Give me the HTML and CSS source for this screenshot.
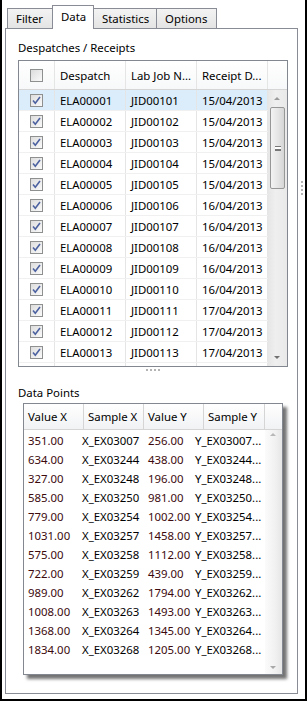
FILE: index.html
```html
<!DOCTYPE html>
<html lang="en">
<head>
  <meta charset="UTF-8" />
  <title>Data</title>
  <link rel="stylesheet" href="styles.css">
</head>
<body>
  <div class="window">
    <div class="main">
      <div class="tabs">
        <div class="tab">Filter</div>
        <div class="tab active">Data</div>
        <div class="tab">Statistics</div>
        <div class="tab">Options</div>
      </div>

      <div class="panel">
        <div class="label first">Despatches / Receipts</div>

        <div class="grid1">
          <div class="g1-head">
            <div class="c-chk"><span class="box"></span></div>
            <div class="c-col">Despatch</div>
            <div class="c-col">Lab Job N...</div>
            <div class="c-col">Receipt D...</div>
            <div class="c-pad"></div>
          </div>
          <div class="g1-body">
            <div class="g1-rows" id="rows1"></div>
            <div class="vscroll">
              <div class="arrow up"></div>
              <div class="thumb"><span class="grip-lines"></span></div>
              <div class="track"></div>
              <div class="arrow down"></div>
            </div>
          </div>
        </div>

        <div class="hgrip"><span></span><span></span><span></span><span></span></div>

        <div class="label">Data Points</div>

        <div class="grid2">
          <div class="g2-head">
            <div class="h2">Value X</div>
            <div class="h2">Sample X</div>
            <div class="h2">Value Y</div>
            <div class="h2">Sample Y</div>
            <div class="c-pad"></div>
          </div>
          <div class="g2-body">
            <div class="g2-rows" id="rows2"></div>
            <div class="vscroll light">
              <div class="arrow up"></div>
              <div class="track"></div>
              <div class="arrow down"></div>
            </div>
          </div>
        </div>
      </div>
    </div>
    <div class="vgrip"><span></span><span></span><span></span><span></span></div>
  </div>

  <script>
    const check = '<svg width="13" height="13" viewBox="0 0 13 13"><defs><linearGradient id="cb" x1="0" y1="0" x2="1" y2="1"><stop offset="0" stop-color="#dcdcdc"/><stop offset="1" stop-color="#fbfbfb"/></linearGradient></defs><rect x="0.5" y="0.5" width="12" height="12" fill="url(#cb)" stroke="#8e8f8f"/><path d="M3 6.5 L5.3 9.2 L10 3" fill="none" stroke="#4c61a0" stroke-width="1.6"/></svg>';

    const despatches = [
      ["ELA00001", "JID00101", "15/04/2013"],
      ["ELA00002", "JID00102", "15/04/2013"],
      ["ELA00003", "JID00103", "15/04/2013"],
      ["ELA00004", "JID00104", "15/04/2013"],
      ["ELA00005", "JID00105", "15/04/2013"],
      ["ELA00006", "JID00106", "16/04/2013"],
      ["ELA00007", "JID00107", "16/04/2013"],
      ["ELA00008", "JID00108", "16/04/2013"],
      ["ELA00009", "JID00109", "16/04/2013"],
      ["ELA00010", "JID00110", "16/04/2013"],
      ["ELA00011", "JID00111", "17/04/2013"],
      ["ELA00012", "JID00112", "17/04/2013"],
      ["ELA00013", "JID00113", "17/04/2013"]
    ];

    const points = [
      ["351.00", "X_EX03007", "256.00", "Y_EX03007..."],
      ["634.00", "X_EX03244", "438.00", "Y_EX03244..."],
      ["327.00", "X_EX03248", "196.00", "Y_EX03248..."],
      ["585.00", "X_EX03250", "981.00", "Y_EX03250..."],
      ["779.00", "X_EX03254", "1002.00", "Y_EX03254..."],
      ["1031.00", "X_EX03257", "1458.00", "Y_EX03257..."],
      ["575.00", "X_EX03258", "1112.00", "Y_EX03258..."],
      ["722.00", "X_EX03259", "439.00", "Y_EX03259..."],
      ["989.00", "X_EX03262", "1794.00", "Y_EX03262..."],
      ["1008.00", "X_EX03263", "1493.00", "Y_EX03263..."],
      ["1368.00", "X_EX03264", "1345.00", "Y_EX03264..."],
      ["1834.00", "X_EX03268", "1205.00", "Y_EX03268..."]
    ];

    const rows1 = document.getElementById("rows1");
    despatches.forEach((d, i) => {
      const row = document.createElement("div");
      row.className = "r1" + (i === 0 ? " selected" : "");
      row.innerHTML = `<div class="c-chk">${check}</div><div class="c-col">${d[0]}</div><div class="c-col">${d[1]}</div><div class="c-col">${d[2]}</div>`;
      rows1.appendChild(row);
    });
    const peek = document.createElement("div");
    peek.className = "r1 peek";
    peek.innerHTML = `<div class="c-chk">${check}</div><div class="c-col"></div><div class="c-col"></div><div class="c-col"></div>`;
    rows1.appendChild(peek);

    const rows2 = document.getElementById("rows2");
    points.forEach(p => {
      const row = document.createElement("div");
      row.className = "r2";
      row.innerHTML = `<div class="num">${p[0]}</div><div>${p[1]}</div><div class="num">${p[2]}</div><div>${p[3]}</div>`;
      rows2.appendChild(row);
    });
  </script>
</body>
</html>
```

FILE: styles.css
```css
body {
  margin: 0;
  background: #fff;
  font-family: "Noto Sans", "Open Sans", sans-serif;
  font-size: 11.4px;
  color: #000;
}
.window {
  width: 307px;
  height: 701px;
  box-sizing: border-box;
  border: solid #000;
  border-width: 0 2px 2px 2px;
  padding: 5px 0 5px 3px;
  display: flex;
}
.main {
  width: 295px;
  display: flex;
  flex-direction: column;
}
.vgrip {
  width: 7px;
  display: flex;
  flex-direction: column;
  align-items: center;
  gap: 2px;
  padding-top: 176px;
}
.vgrip span, .hgrip span {
  width: 2px;
  height: 2px;
  background: #b4b4b4;
}

/* tabs */
.tabs {
  display: flex;
  align-items: flex-end;
  height: 23px;
  padding-left: 2px;
  position: relative;
  z-index: 1;
}
.tab {
  height: 20px;
  line-height: 19px;
  box-sizing: border-box;
  padding: 0 8px;
  border: 1px solid #898c95;
  border-bottom: none;
  margin-right: -1px;
  background: linear-gradient(#f3f3f3, #e4e4e4);
}
.tab:nth-child(1) { width: 46px; }
.tab:nth-child(2) { width: 42px; }
.tab:nth-child(3) { width: 64px; }
.tab:nth-child(4) { width: 61px; }
.tab.active {
  height: 24px;
  line-height: 22px;
  margin-bottom: -1px;
  background: #fff;
  position: relative;
}

.panel {
  flex: 1;
  border: 1px solid #898c95;
  background: #fff;
  padding: 0 0 0 12px;
}
.label {
  height: 20px;
  line-height: 20px;
}
.label.first {
  margin-top: 9px;
  height: 22px;
}

/* despatch grid */
.grid1 {
  width: 270px;
  box-sizing: border-box;
  border: 1px solid #828790;
  height: 307px;
  overflow: hidden;
}
.g1-head {
  display: flex;
  height: 29px;
  box-sizing: border-box;
  border-bottom: 1px solid #d5d5d5;
  background: linear-gradient(#fff, #f7f8f9);
}
.g1-head > div {
  display: flex;
  align-items: center;
  box-sizing: border-box;
}
.c-chk {
  width: 36px;
  border-right: 1px solid #e5e5e5;
  display: flex;
  align-items: center;
  justify-content: center;
  box-sizing: border-box;
}
.c-chk svg { display: block; }
.c-col {
  width: 71px;
  padding-left: 5px;
  border-right: 1px solid #e5e5e5;
  box-sizing: border-box;
  white-space: nowrap;
  overflow: hidden;
}
.c-pad { flex: 1; }
.box {
  width: 11px;
  height: 11px;
  border: 1px solid #8e8f8f;
  background: linear-gradient(135deg, #dcdcdc, #fafafa);
}
.g1-body {
  display: flex;
  height: 276px;
}
.g1-rows {
  width: 249px;
  overflow: hidden;
}
.r1 {
  display: flex;
  height: 21px;
  box-sizing: border-box;
  border-bottom: 1px solid #f0f0f0;
}
.r1 > div {
  display: flex;
  align-items: center;
}
.r1.selected {
  background: #dbecfa;
}

/* scrollbars */
.vscroll {
  flex: 1;
  display: flex;
  flex-direction: column;
  align-items: center;
  background: linear-gradient(90deg, #e6e6e6, #efefef 40%, #e9e9e9);
}
.vscroll .track { flex: 1; }
.arrow {
  height: 17px;
  width: 17px;
  position: relative;
}
.arrow::after {
  content: "";
  position: absolute;
  left: 5px;
  border-left: 3px solid transparent;
  border-right: 3px solid transparent;
}
.arrow.up::after {
  top: 7px;
  border-bottom: 3px solid #9a9a9a;
}
.arrow.down::after {
  top: 7px;
  border-top: 3px solid #707070;
}
.thumb {
  width: 15px;
  height: 82px;
  box-sizing: border-box;
  border: 1px solid #979797;
  border-radius: 2px;
  background: linear-gradient(90deg, #f3f3f3, #e6e6e6 50%, #d6d6d6);
  display: flex;
  align-items: center;
  justify-content: center;
}
.grip-lines {
  width: 6px;
  height: 5px;
  border-top: 1px solid #777;
  border-bottom: 1px solid #777;
  background: linear-gradient(#fff 0 2px, #777 2px 3px, #fff 3px);
  box-sizing: border-box;
}
.vscroll.light {
  background: linear-gradient(90deg, #fbfbfb, #f1f1f1 60%, #e6e6e6);
}
.vscroll.light .arrow.up::after { top: 3px; border-bottom-color: #b8b8b8; }
.vscroll.light .arrow.down::after { top: 9px; border-top-color: #a8a8a8; }

.hgrip {
  display: flex;
  gap: 2px;
  justify-content: center;
  width: 270px;
  height: 14px;
  padding-top: 2px;
}

/* data points grid */
.grid2 {
  margin-left: 5px;
  width: 260px;
  height: 272px;
  box-sizing: border-box;
  border: 1px solid #828790;
  box-shadow: 4px 4px 3px rgba(0, 0, 0, 0.55);
  display: flex;
  flex-direction: column;
}
.g2-head {
  display: flex;
  height: 26px;
  box-sizing: border-box;
  border-bottom: 1px solid #d5d5d5;
  background: linear-gradient(#fff, #f1f2f4);
}
.h2 {
  width: 60px;
  padding-left: 4px;
  box-sizing: border-box;
  border-right: 1px solid #d5d5d5;
  display: flex;
  align-items: center;
  white-space: nowrap;
}
.h2:nth-child(4) { width: 61px; }
.g2-body {
  flex: 1;
  display: flex;
}
.g2-rows {
  width: 241px;
  padding-top: 1px;
}
.r2 {
  display: grid;
  grid-template-columns: 54px 66px 47px 1fr;
  height: 19px;
  align-items: center;
  padding-left: 4px;
  white-space: nowrap;
}
.r2 .num {
  color: #3c0a0e;
}
```
